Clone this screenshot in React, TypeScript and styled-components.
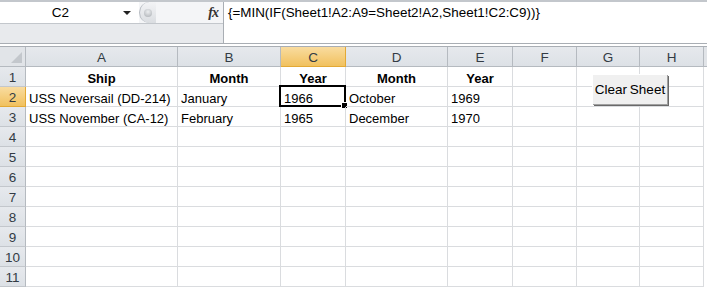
import React from "react";
import styled, { createGlobalStyle } from "styled-components";

const Global = createGlobalStyle`
  html, body { margin: 0; padding: 0; background: #fff; overflow: hidden; }
  body { font-family: "Liberation Sans", Arial, sans-serif; }
`;

const Page = styled.div`
  width: 707px;
  height: 287px;
  display: flex;
  flex-direction: column;
  overflow: hidden;
`;

const FormulaBar = styled.div`
  display: flex;
  height: 41px;
  border-top: 2px solid #c3c7cc;
  border-bottom: 1px solid #a9aeb4;
`;

const LeftPart = styled.div`
  width: 223px;
  display: flex;
  flex-direction: column;
  border-right: 1px solid #a9aeb4;
`;

const TopRow = styled.div`
  height: 21px;
  display: flex;
  align-items: stretch;
  border-bottom: 1px solid #c3c7cc;
`;

const NameBox = styled.div`
  width: 139px;
  position: relative;
  display: flex;
  align-items: center;
  justify-content: center;
  font-size: 13.5px;
  color: #000;
  padding-right: 18px;
  box-sizing: border-box;
`;

const DropArrow = styled.span`
  position: absolute;
  right: 8px;
  top: 9px;
  width: 0;
  height: 0;
  border-left: 4px solid transparent;
  border-right: 4px solid transparent;
  border-top: 4px solid #222;
`;

const Splitter = styled.div`
  flex: 1;
  display: flex;
  align-items: center;
  background: #f4f5f7;
  position: relative;
`;

const Knob = styled.div`
  width: 17px;
  height: 100%;
  border-radius: 11px 0 0 11px;
  background: linear-gradient(#f3f4f6, #dadde1);
  border-left: 1px solid #b6bbc1;
  box-sizing: border-box;
  display: flex;
  align-items: center;
  justify-content: center;
`;

const KnobDot = styled.div`
  width: 8px;
  height: 8px;
  border-radius: 50%;
  background: radial-gradient(circle at 50% 35%, #eceef0, #a9adb2);
`;

const Fx = styled.span`
  margin-left: auto;
  margin-right: 5px;
  font-family: "Liberation Serif", "Times New Roman", serif;
  font-style: italic;
  font-weight: bold;
  font-size: 14px;
  color: #333;
  letter-spacing: -1px;
`;

const GrayStrip = styled.div`
  flex: 1;
  background: #e8eaed;
`;

const FormulaText = styled.div`
  flex: 1;
  padding: 3px 0 0 4px;
  font-size: 13.4px;
  color: #000;
  white-space: nowrap;
`;

const Separator = styled.div`
  height: 2px;
  background: #fff;
  border-bottom: 1px solid #a9aeb4;
`;

const cols = [25, 151, 102, 64, 101, 64, 63, 62, 63];

const Sheet = styled.div`
  position: relative;
  flex: 1;
  display: grid;
  grid-template-columns: ${cols.map((c) => `${c + 1}px`).join(" ")} 1fr;
  grid-auto-rows: 20px;
  background: #fff;
`;

const Corner = styled.div`
  background: #e1e4e8;
  border-right: 1px solid #b5bac0;
  border-bottom: 1px solid #b5bac0;
  position: relative;
  &::after {
    content: "";
    position: absolute;
    right: 3px;
    bottom: 3px;
    width: 0;
    height: 0;
    border-left: 11px solid transparent;
    border-bottom: 11px solid #c3c7cc;
  }
`;

const ColHead = styled.div<{ $sel?: boolean }>`
  background: ${(p) => (p.$sel ? "linear-gradient(#f9dca0, #f1c15e)" : "linear-gradient(#e6e9ed, #dde1e6)")};
  border-right: 1px solid ${(p) => (p.$sel ? "#e3a935" : "#b5bac0")};
  border-bottom: 1px solid ${(p) => (p.$sel ? "#e3a935" : "#b5bac0")};
  display: flex;
  align-items: center;
  justify-content: center;
  padding-top: 1px;
  font-size: 13.5px;
  color: #333b44;
`;

const RowHead = styled(ColHead)`
  border-bottom-color: ${(p) => (p.$sel ? "#e3a935" : "#c3c7cc")};
`;

const Filler = styled.div`
  background: #e1e4e8;
  border-bottom: 1px solid #b5bac0;
`;

const Cell = styled.div<{ $bold?: boolean; $center?: boolean }>`
  border-right: 1px solid #dadcdf;
  border-bottom: 1px solid #dadcdf;
  display: flex;
  align-items: center;
  justify-content: ${(p) => (p.$center ? "center" : "flex-start")};
  padding: 3px 3px 0;
  font-size: 13px;
  font-weight: ${(p) => (p.$bold ? "bold" : "normal")};
  color: #000;
  white-space: nowrap;
  position: relative;
  overflow: visible;
`;

const Outside = styled.div`
  background: #fff;
`;

const Selection = styled.div`
  position: absolute;
  left: -2px;
  top: -2px;
  right: -1px;
  bottom: -1px;
  border: 2px solid #000;
  pointer-events: none;
  &::after {
    content: "";
    position: absolute;
    right: -4px;
    bottom: -4px;
    width: 5px;
    height: 5px;
    background: #000;
    border: 1px solid #fff;
  }
`;

const ClearButton = styled.button`
  position: absolute;
  left: 592px;
  top: 27px;
  width: 75px;
  height: 30px;
  background: #f0f0f0;
  border: none;
  border-top: 1px solid #fff;
  border-left: 1px solid #fff;
  box-shadow: 1px 1px 0 #a0a0a0, 2px 2px 0 #696969;
  font-family: "Liberation Sans", Arial, sans-serif;
  font-size: 13.5px;
  color: #000;
  padding: 0;
  word-spacing: -1px;
  white-space: nowrap;
`;

type CellData = { t?: string; bold?: boolean; center?: boolean };

const letters = ["A", "B", "C", "D", "E", "F", "G", "H"];

const data: CellData[][] = [
  [
    { t: "Ship", bold: true, center: true },
    { t: "Month", bold: true, center: true },
    { t: "Year", bold: true, center: true },
    { t: "Month", bold: true, center: true },
    { t: "Year", bold: true, center: true },
  ],
  [{ t: "USS Neversail (DD-214)" }, { t: "January" }, { t: "1966" }, { t: "October" }, { t: "1969" }],
  [{ t: "USS November (CA-12)" }, { t: "February" }, { t: "1965" }, { t: "December" }, { t: "1970" }],
];

export default function App() {
  const rows = Array.from({ length: 11 }, (_, i) => i + 1);
  return (
    <Page>
      <Global />
      <FormulaBar>
        <LeftPart>
          <TopRow>
            <NameBox>
              C2
              <DropArrow />
            </NameBox>
            <Splitter>
              <Knob>
                <KnobDot />
              </Knob>
              <Fx>fx</Fx>
            </Splitter>
          </TopRow>
          <GrayStrip />
        </LeftPart>
        <FormulaText>{"{=MIN(IF(Sheet1!A2:A9=Sheet2!A2,Sheet1!C2:C9))}"}</FormulaText>
      </FormulaBar>
      <Separator />
      <Sheet>
        <Corner />
        {letters.map((l) => (
          <ColHead key={l} $sel={l === "C"}>
            {l}
          </ColHead>
        ))}
        <Filler />
        {rows.map((r) => (
          <React.Fragment key={r}>
            <RowHead $sel={r === 2}>{r}</RowHead>
            {letters.map((l, ci) => {
              const d = data[r - 1]?.[ci];
              return (
                <Cell key={l} $bold={d?.bold} $center={d?.center}>
                  {d?.t}
                  {r === 2 && l === "C" && <Selection />}
                </Cell>
              );
            })}
            <Outside />
          </React.Fragment>
        ))}
        <ClearButton>Clear Sheet</ClearButton>
      </Sheet>
    </Page>
  );
}
